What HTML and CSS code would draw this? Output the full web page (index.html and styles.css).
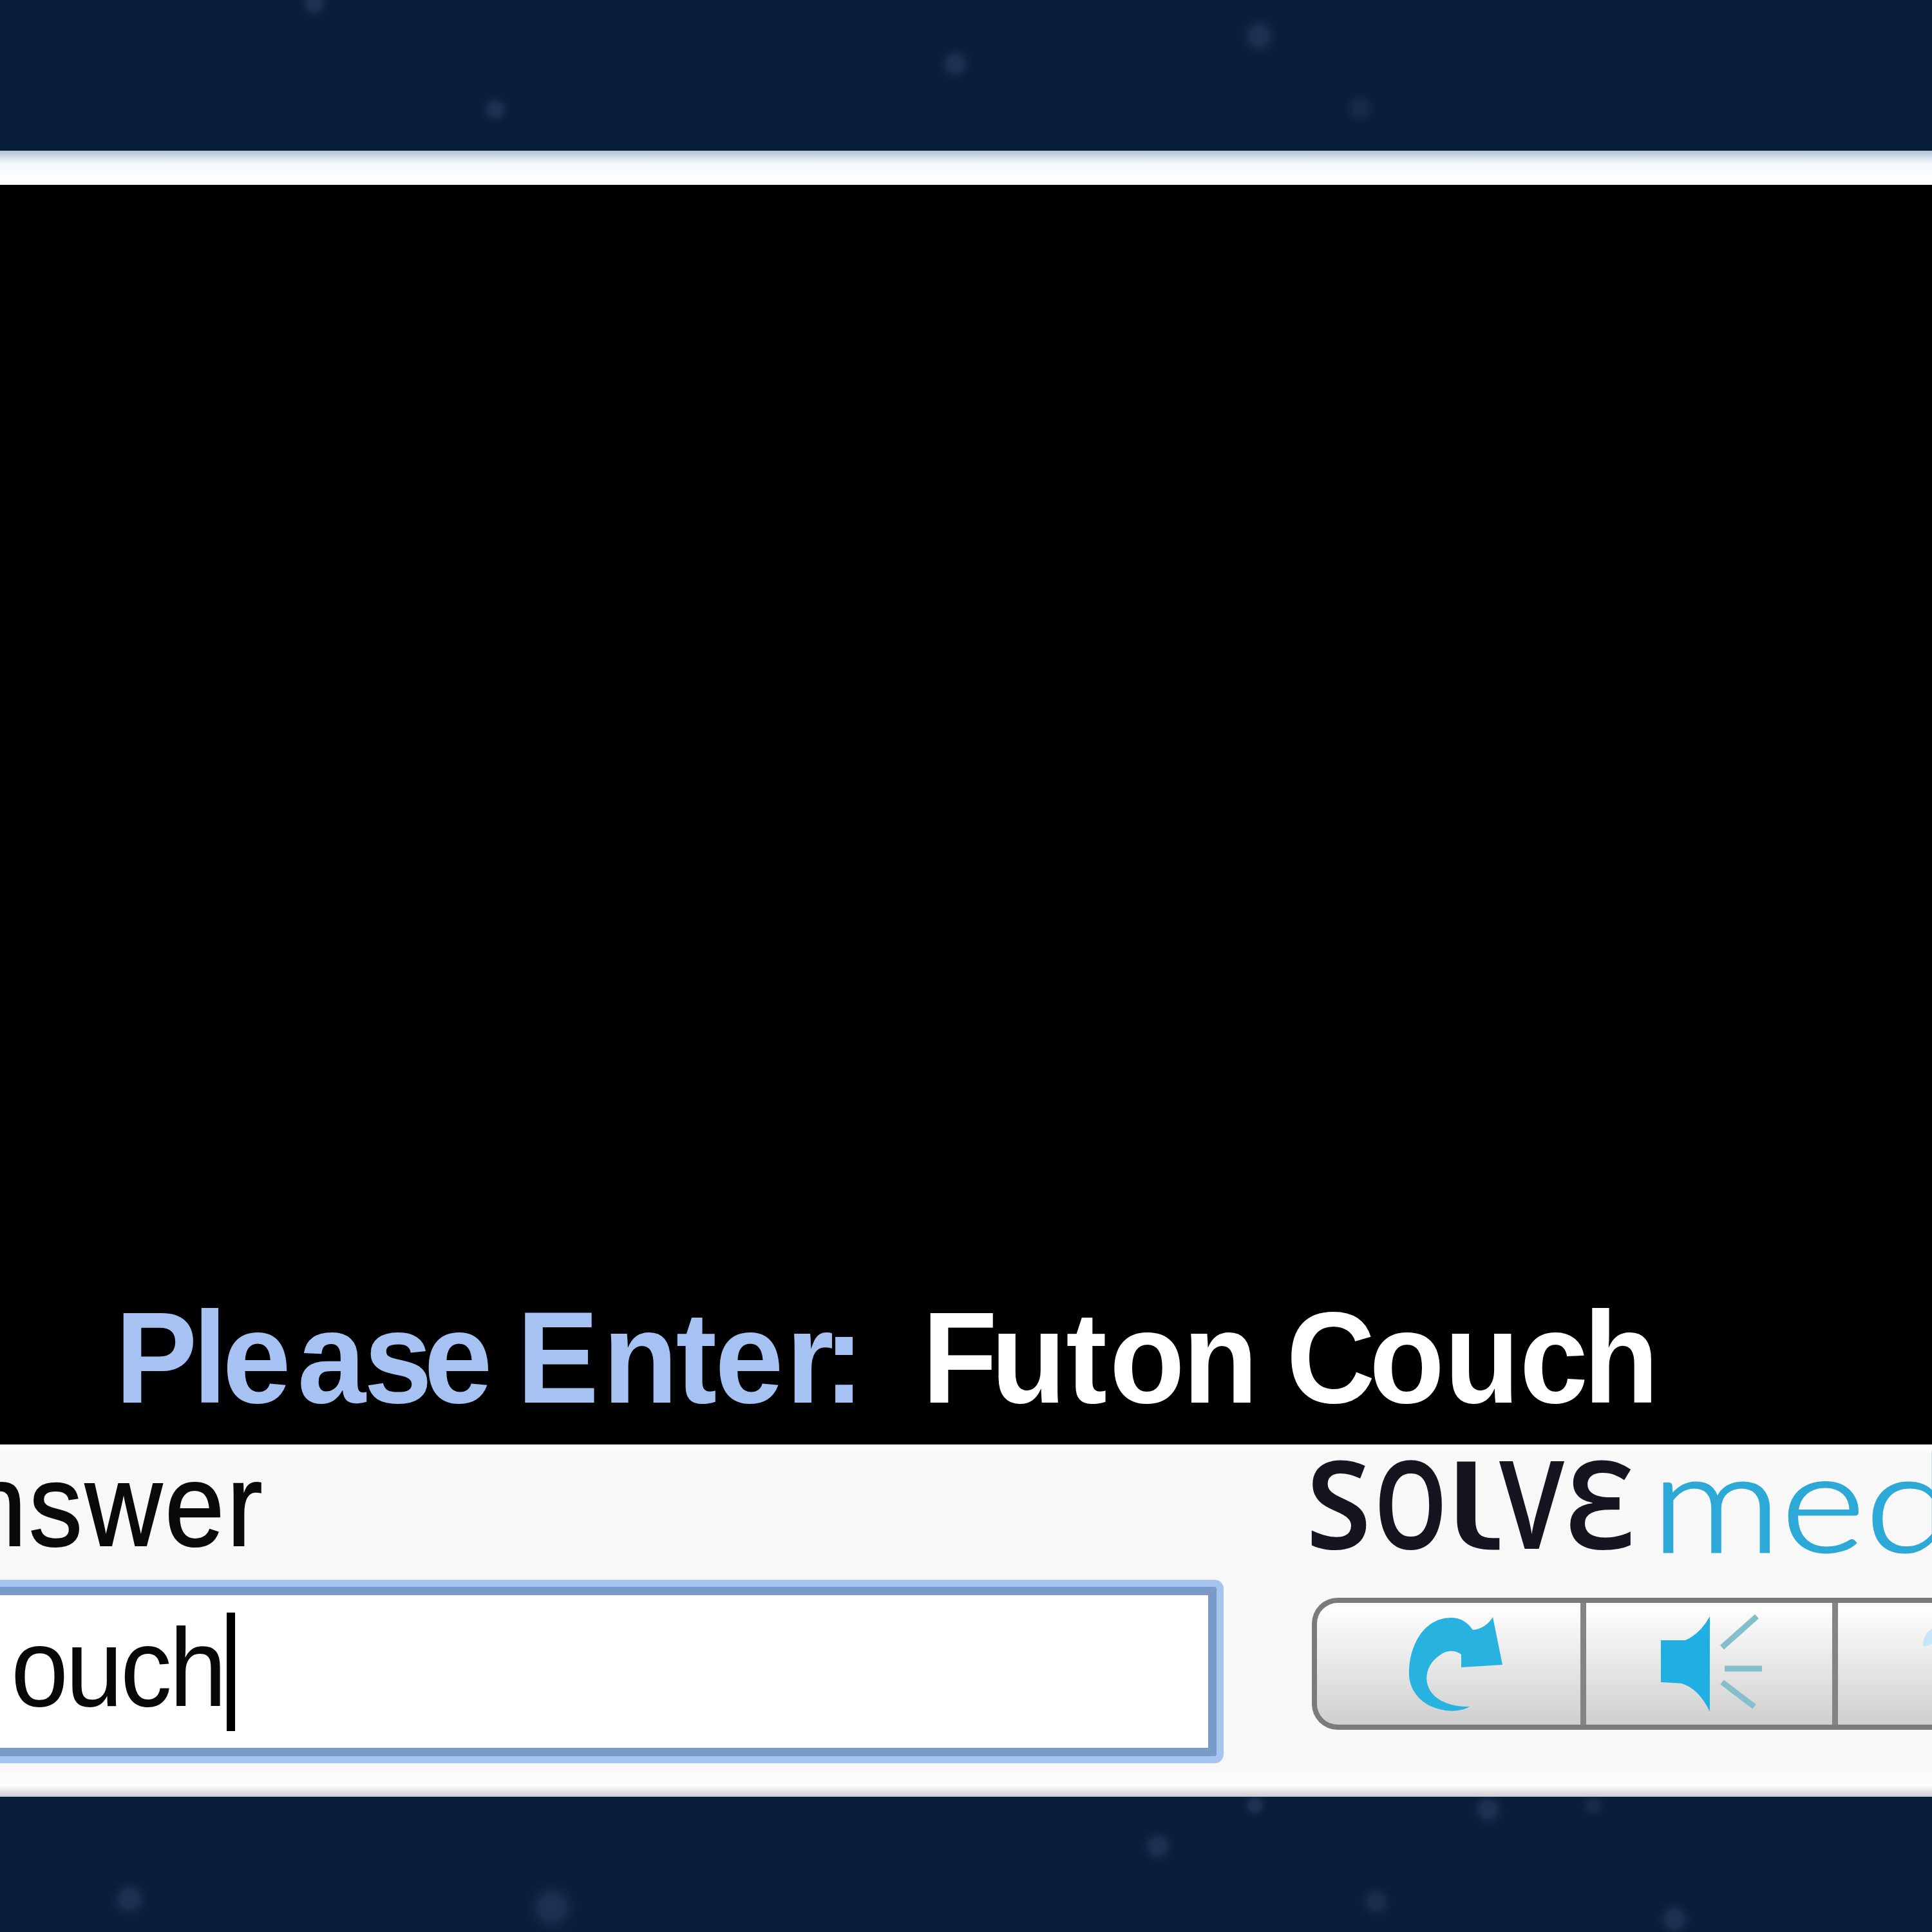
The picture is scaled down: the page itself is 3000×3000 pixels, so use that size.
FILE: index.html
```html
<!DOCTYPE html>
<html lang="en">
  <head>
    <meta charset="UTF-8" />
    <title>Solve Media</title>
    <link rel="stylesheet" href="styles.css">
  </head>
  <body>
    <div class="sky sky-top">
      <svg width="3000" height="234" viewBox="0 0 3000 234">
        <defs>
          <radialGradient id="star">
            <stop offset="0" stop-color="#1e3350" />
            <stop offset="0.4" stop-color="#1a2f4d" />
            <stop offset="1" stop-color="#081e3a" stop-opacity="0" />
          </radialGradient>
        </defs>
        <g fill="url(#star)">
          <circle cx="488" cy="6" r="26" />
          <circle cx="769" cy="170" r="26" />
          <circle cx="1483" cy="99" r="30" />
          <circle cx="1955" cy="56" r="34" />
          <circle cx="2112" cy="168" r="28" opacity="0.7" />
        </g>
      </svg>
    </div>
    <div class="panel">
      <div class="stage">
        <div class="caption">
          <div class="prompt"><span class="k-7">Pl</span><span class="k10">e</span><span class="k-3">a</span><span class="k-13">s</span><span class="k-15">e</span> <span class="k6">E</span><span class="k-3">nt</span><span class="k4">e</span><span class="k-16">r</span>:</div>
          <div class="phrase"><span class="k-10">F</span>u<span class="k4">t</span><span class="k-3">o</span><span class="k-9">n</span> <span class="k-9">C</span>ou<span class="k-7">c</span>h</div>
        </div>
      </div>
      <div class="controls">
        <div class="answer">
          <div class="label">Answer</div>
          <div class="field">
            <span class="value">ouch</span>
            <span class="caret"></span>
          </div>
        </div>
        <div class="side">
          <svg class="logo" width="1000" height="190" viewBox="2000 2243 1000 190">
            <g class="solve">
              <text x="2028" y="2405" textLength="101" lengthAdjust="spacingAndGlyphs">S</text>
              <text x="2134" y="2405" textLength="113" lengthAdjust="spacingAndGlyphs">O</text>
              <text class="hook" x="2240" y="2405" textLength="88" lengthAdjust="spacingAndGlyphs">Ɩ</text>
              <text x="2328" y="2405" textLength="101" lengthAdjust="spacingAndGlyphs">V</text>
              <text x="2430" y="2405" textLength="110" lengthAdjust="spacingAndGlyphs">Ɛ</text>
            </g>
            <text class="media" x="2564" y="2410" textLength="470" lengthAdjust="spacingAndGlyphs">med</text>
          </svg>
          <div class="buttons">
            <div class="btn btn-refresh">
              <svg width="150" height="150" viewBox="2186 2502 150 150">
                <path fill="#28b2e0" d="M2282 2643C2268 2651 2250 2651 2235 2647C2207 2640 2190 2620 2188 2595C2186 2550 2211 2505 2253 2505C2268 2505 2279 2512 2287 2524Q2307 2522 2318 2504L2333 2578L2269 2582V2562C2260 2555 2246 2555 2236 2563C2219 2574 2213 2592 2216 2606C2221 2632 2252 2644 2282 2643Z" />
              </svg>
            </div>
            <div class="btn btn-audio">
              <svg width="162" height="154" viewBox="2582 2504 162 154">
                <path fill="#1fafe2" d="M2584 2544H2622Q2645 2534 2660 2507V2655Q2643 2619 2616 2611L2584 2609Z" />
                <path stroke="#84bfcc" stroke-width="9" fill="none" d="M2679 2555L2733 2507M2683 2588H2741M2679 2609L2729 2647" />
              </svg>
            </div>
            <div class="btn btn-help">
              <svg width="14" height="30" viewBox="0 0 14 30"><path fill="#c5e6fa" d="M14 0Q0 8 0 28L14 24Z" /></svg>
            </div>
          </div>
        </div>
      </div>
    </div>
    <div class="sky sky-bottom">
      <svg width="3000" height="210" viewBox="0 2790 3000 210">
        <g fill="url(#star)">
          <circle cx="201" cy="2949" r="34" />
          <circle cx="857" cy="2962" r="46" />
          <circle cx="1798" cy="2867" r="30" />
          <circle cx="1949" cy="2803" r="22" />
          <circle cx="2311" cy="2810" r="30" />
          <circle cx="2474" cy="2804" r="22" opacity="0.7" />
          <circle cx="2137" cy="2953" r="30" opacity="0.8" />
          <circle cx="2600" cy="2980" r="32" />
        </g>
      </svg>
    </div>
  </body>
</html>
```
FILE: styles.css
```css
* {
  box-sizing: border-box;
}
body {
  margin: 0;
  width: 3000px;
  height: 3000px;
  overflow: hidden;
  display: flex;
  flex-direction: column;
  background: #081e3a;
  font-family: "Liberation Sans", Arial, sans-serif;
  font-kerning: none;
}
svg {
  display: block;
}
.sky-top {
  height: 234px;
}
.sky-bottom {
  height: 210px;
}
.panel {
  height: 2556px;
  padding-top: 53px;
  background: linear-gradient(#b4c2d2, #f2f8ff 20px, #ffffff 50px);
}

/* black ad area with the phrase at the bottom */
.stage {
  height: 1956px;
  display: flex;
  align-items: flex-end;
  background: #000000;
}
.caption {
  display: flex;
  padding-left: 179px;
  padding-bottom: 21px;
  font-size: 191px;
  line-height: 220px;
  font-weight: bold;
  white-space: pre;
  transform: scaleY(1.06);
  transform-origin: 0 175px;
}
.prompt {
  width: 1253px;
  color: #a6c2f2;
}
.phrase {
  color: #ffffff;
}
.k-16 { letter-spacing: -16px; }
.k-15 { letter-spacing: -15px; }
.k-13 { letter-spacing: -13px; }
.k-10 { letter-spacing: -10px; }
.k-9 { letter-spacing: -9px; }
.k-7 { letter-spacing: -7px; }
.k-3 { letter-spacing: -3px; }
.k4 { letter-spacing: 4px; }
.k6 { letter-spacing: 6px; }
.k10 { letter-spacing: 10px; }

.controls {
  height: 547px;
  display: flex;
  background: linear-gradient(#ffffff, #f8f8f8 18px, #f8f8f8 500px, #fdfdfd 530px, #c8ccd2 547px);
}
.answer {
  width: 2000px;
}
.label {
  height: 210px;
  margin-left: -166px;
  font-size: 166px;
  line-height: 200px;
  letter-spacing: 4px;
  color: #0a0a0a;
  -webkit-text-stroke: 2px #0a0a0a;
  transform: scaleY(1.1);
  transform-origin: 0 158px;
}
.field {
  width: 1900px;
  height: 285px;
  display: flex;
  align-items: center;
  padding-left: 17px;
  background: #ffffff;
  border: 11px solid #a6c4ef;
  border-left: 0;
  border-radius: 0 14px 14px 0;
  box-shadow: inset 0 13px #7a9bc9, inset 0 -13px #7a9bc9, inset -13px 0 #7a9bc9;
}
.value {
  width: 335px;
  padding-bottom: 12px;
  font-size: 160px;
  letter-spacing: -4px;
  color: #080808;
  transform: scaleY(1.08);
}
.caret {
  width: 13px;
  height: 184px;
  background: #000000;
}

.side {
  width: 1000px;
}
.logo {
  margin-bottom: 48px;
}
.solve {
  font-family: "Noto Sans", sans-serif;
  font-size: 190px;
  font-weight: 600;
  fill: #17131f;
}
.hook {
  font-family: "DejaVu Sans", sans-serif;
  font-size: 184px;
  font-weight: 400;
  stroke: #17131f;
  stroke-width: 3px;
}
.media {
  font-family: Lato, sans-serif;
  font-weight: 300;
  font-size: 214px;
  fill: #2ca9d6;
  stroke: #2ca9d6;
  stroke-width: 3px;
}
.buttons {
  width: 963px;
  height: 205px;
  margin-left: 37px;
  display: flex;
  border: 8px solid #7c7a7c;
  border-right: 0;
  border-radius: 40px 0 0 40px;
  overflow: hidden;
  background: linear-gradient(#ffffff, #ececec 40%, #cfcfcf);
}
.btn {
  display: flex;
  align-items: center;
  flex-shrink: 0;
  border-right: 9px solid #858385;
}
.btn-refresh {
  width: 418px;
  padding-left: 141px;
}
.btn-audio {
  width: 391px;
  padding-left: 114px;
}
.btn-help {
  width: 146px;
  padding-left: 132px;
  padding-bottom: 80px;
  border-right: 0;
}
```
